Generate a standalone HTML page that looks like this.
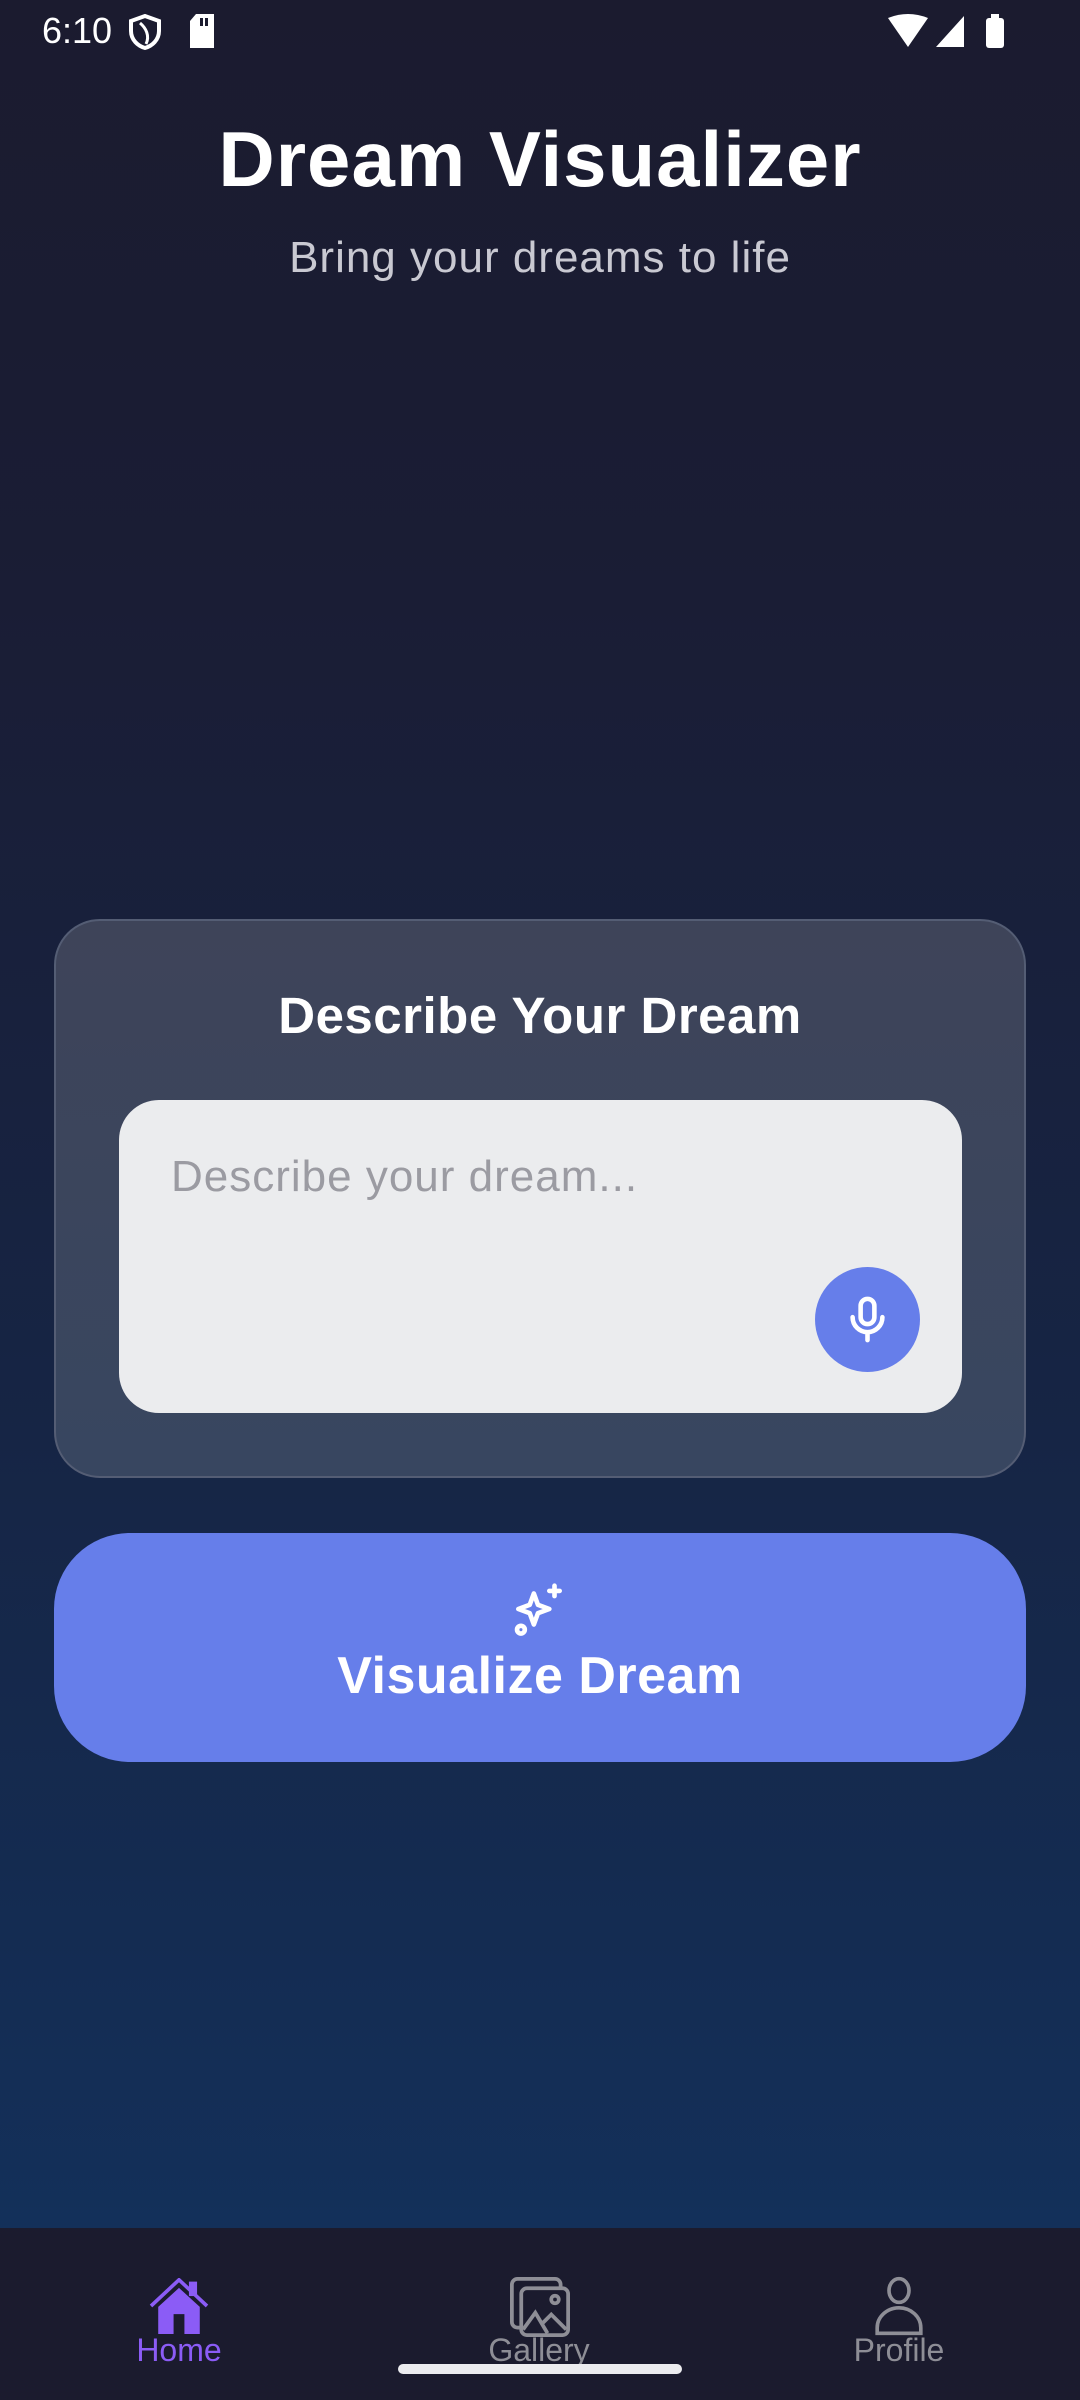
<!DOCTYPE html>
<html><head><meta charset="utf-8"><style>
*{margin:0;padding:0;box-sizing:border-box}
body{width:1080px;height:2400px;overflow:hidden;font-family:"Liberation Sans",sans-serif;background:linear-gradient(180deg,#1b1b2f 0%,#1a1d35 25%,#162545 60%,#13305a 93%);position:relative;color:#fff}
.abs{position:absolute}
.c{left:0;width:1080px;text-align:center}
</style></head><body>
<div class="abs" style="left:42px;top:10px;font-size:36px;color:#fff">6:10</div>
<svg class="abs" style="left:128px;top:14px" width="34" height="36" viewBox="0 0 34 36"><path d="M17 2 L31 7 V17 C31 26 24 32 17 34 C10 32 3 26 3 17 V7 Z" fill="none" stroke="#fff" stroke-width="4"/><path d="M12 9 C18 14 22 22 18 30" fill="none" stroke="#fff" stroke-width="3"/></svg>
<svg class="abs" style="left:188px;top:14px" width="28" height="34"><path d="M8 0 H26 V34 H2 V7 Z" fill="#fff"/><rect x="12" y="4" width="3" height="8" fill="#1b1b2f"/><rect x="17" y="4" width="3" height="8" fill="#1b1b2f"/></svg>
<svg class="abs" style="left:888px;top:14px" width="120" height="34"><path d="M0 4 Q20 -4 40 4 L20 33 Z" fill="#fff"/><path d="M48 33 L76 2 V33 Z" fill="#fff"/><rect x="98" y="4" width="18" height="30" rx="3" fill="#fff"/><rect x="103" y="0" width="8" height="5" fill="#fff"/></svg>

<div class="abs c" style="top:114px;font-size:78px;font-weight:bold;letter-spacing:1px">Dream Visualizer</div>
<div class="abs c" style="top:233px;font-size:44px;color:#c9c9d2;letter-spacing:1px">Bring your dreams to life</div>

<div class="abs" style="left:54px;top:919px;width:972px;height:559px;border-radius:46px;background:linear-gradient(180deg,#3e4459,#384660);border:2px solid #545d74"></div>
<div class="abs c" style="top:986px;font-size:51px;font-weight:bold;letter-spacing:0.5px">Describe Your Dream</div>
<div class="abs" style="left:119px;top:1100px;width:843px;height:313px;border-radius:40px;background:#ebecee"></div>
<div class="abs" style="left:171px;top:1152px;font-size:44px;color:#9b9ba2;letter-spacing:1px">Describe your dream...</div>
<div class="abs" style="left:815px;top:1267px;width:105px;height:105px;border-radius:50%;background:#667eea"></div>
<svg class="abs" style="left:840px;top:1292px" width="55" height="55" viewBox="0 0 24 24" fill="none" stroke="#fff" stroke-width="2" stroke-linecap="round"><rect x="9" y="3" width="6" height="11" rx="3"/><path d="M5.5 11a6.5 6.5 0 0 0 13 0M12 17.5V21"/></svg>

<div class="abs" style="left:54px;top:1533px;width:972px;height:229px;border-radius:76px;background:#667eea"></div>
<svg class="abs" style="left:508px;top:1578px" width="62" height="62" viewBox="0 0 24 24" fill="none" stroke="#fff" stroke-width="1.8" stroke-linejoin="round" stroke-linecap="round"><path d="M10 6 L11.6 10.4 L16 12 L11.6 13.6 L10 18 L8.4 13.6 L4 12 L8.4 10.4 Z"/><path d="M18 3v4M16 5h4"/><circle cx="5" cy="20" r="1.5"/></svg>
<div class="abs c" style="top:1646px;font-size:52px;font-weight:bold;letter-spacing:0.5px">Visualize Dream</div>

<div class="abs" style="left:0;top:2228px;width:1080px;height:172px;background:#1b1b2e"></div>
<svg class="abs" style="left:148px;top:2278px" width="62" height="56" viewBox="0 0 66 62"><path d="M2 31 L33 2 L64 31" fill="none" stroke="#8b5cf6" stroke-width="4"/><rect x="44" y="4" width="9" height="16" fill="#8b5cf6"/><path d="M10 32 L33 11 L56 32 V62 H39 V40 H27 V62 H10 Z" fill="#8b5cf6"/></svg>
<div class="abs" style="left:99px;top:2332px;width:160px;text-align:center;font-size:32px;color:#8b5cf6">Home</div>
<svg class="abs" style="left:509px;top:2277px" width="62" height="60" viewBox="0 0 64 64" fill="none" stroke="#8e8e96" stroke-width="4"><rect x="2" y="2" width="52" height="52" rx="6"/><rect x="12" y="12" width="50" height="50" rx="6" fill="#1b1b2e"/><path d="M14 56 L27 38 L40 60 M34 50 L44 40 L60 56"/><circle cx="48" cy="24" r="4"/></svg>
<div class="abs" style="left:459px;top:2332px;width:160px;text-align:center;font-size:32px;color:#8e8e96">Gallery</div>
<svg class="abs" style="left:873px;top:2276px" width="52" height="60" viewBox="0 0 56 66" fill="none" stroke="#8e8e96" stroke-width="4"><ellipse cx="28" cy="16" rx="11" ry="13"/><path d="M4 63 V57 A24 22 0 0 1 52 57 V63 Z"/></svg>
<div class="abs" style="left:819px;top:2332px;width:160px;text-align:center;font-size:32px;color:#8e8e96">Profile</div>
<div class="abs" style="left:398px;top:2364px;width:284px;height:10px;border-radius:5px;background:#ececef"></div>
</body></html>
